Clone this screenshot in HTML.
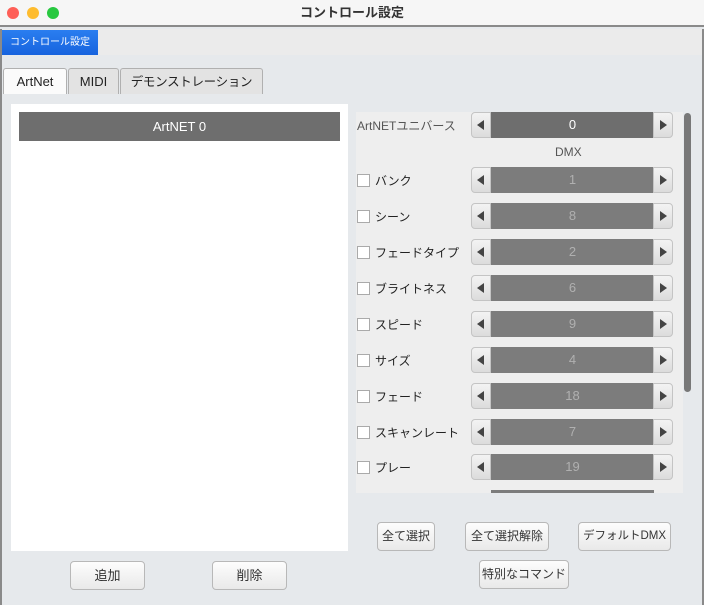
<!DOCTYPE html>
<html><head><meta charset="utf-8"><style>
*{box-sizing:border-box;margin:0;padding:0}
body{width:704px;height:605px;overflow:hidden;background:#e6e9ec;font-family:"Liberation Sans","Noto Sans CJK JP",sans-serif;position:relative;color:#222}
.abs{position:absolute}
.title{left:0;top:0;width:704px;height:27px;background:#f6f6f6;border-bottom:2px solid #8a8a8a;text-align:center;font-size:13px;font-weight:bold;line-height:26px;color:#333}
.dot{top:7px;width:12px;height:12px;border-radius:50%}
.frame{left:0;top:29px;width:704px;height:576px;border-left:2px solid #8a8a8a;border-right:2px solid #8a8a8a}
.topband{left:2px;top:29px;width:700px;height:26px;background:#ebebeb}
.bluetab{left:2px;top:30px;width:96px;height:25px;background:linear-gradient(#2a7ef0,#1763de);color:#fff;font-size:10px;line-height:25px;text-align:center}
.tab{top:68px;height:26px;border:1px solid #b0b0b0;border-bottom:none;border-radius:3px 3px 0 0;background:#e3e3e3;font-size:13px;line-height:26px;text-align:center;white-space:nowrap;overflow:hidden}
.list{left:11px;top:104px;width:337px;height:447px;background:#fff}
.bar{left:19px;top:112px;width:321px;height:29px;background:#6e6e6e;color:#fff;font-size:13px;line-height:29px;text-align:center}
.rp{left:356px;top:112px;width:327px;height:381px;background:#eeeeee;overflow:hidden}
.sb{left:684px;top:113px;width:7px;height:279px;border-radius:4px;background:#787878}
.lbl{font-size:12px;color:#222;left:375px}
.cb{left:357px;width:13px;height:13px;background:#fff;border:1px solid #aaa}
.spin{left:471px;width:202px;height:26px}
.spin .l,.spin .r{position:absolute;top:0;width:20px;height:26px;background:linear-gradient(#f3f3f3,#dcdcdc);border:1px solid #c4c4c4}
.spin .l{left:0;border-radius:4px 0 0 4px}.spin .r{right:0;border-radius:0 4px 4px 0}
.spin .l::after{content:"";position:absolute;left:5px;top:7px;border-top:5px solid transparent;border-bottom:5px solid transparent;border-right:7px solid #444}
.spin .r::after{content:"";position:absolute;left:6px;top:7px;border-top:5px solid transparent;border-bottom:5px solid transparent;border-left:7px solid #444}
.spin .v{position:absolute;left:20px;right:19px;top:0;height:26px;background:#7c7c7c;color:#b0b0b0;font-size:13px;line-height:26px;text-align:center}
.btn{height:29px;border:1px solid #b8b8b8;border-radius:4px;background:linear-gradient(#fdfdfd,#e9e9e9);font-size:12px;line-height:27px;text-align:center;color:#333;white-space:nowrap;overflow:hidden}
</style></head><body>
<div class="abs title">コントロール設定</div>
<div class="abs dot" style="left:7px;background:#fe5f57"></div>
<div class="abs dot" style="left:27px;background:#febc2e"></div>
<div class="abs dot" style="left:47px;background:#28c840"></div>
<div class="abs frame"></div>
<div class="abs topband"></div>
<div class="abs bluetab">コントロール設定</div>
<div class="abs tab" style="left:3px;width:64px;background:#fbfbfb">ArtNet</div>
<div class="abs tab" style="left:68px;width:51px">MIDI</div>
<div class="abs tab" style="left:120px;width:143px;font-size:12.5px;letter-spacing:-0.3px">デモンストレーション</div>
<div class="abs list"></div>
<div class="abs bar">ArtNET 0</div>
<div class="abs rp"></div>
<div class="abs sb"></div>
<div class="abs lbl" style="left:357px;top:117px;color:#555">ArtNETユニバース</div>
<div class="abs spin" style="top:112px"><div class="l"></div><div class="v" style="background:#6e6e6e;color:#fff">0</div><div class="r"></div></div>
<div class="abs" style="left:555px;top:145px;font-size:12px;color:#555">DMX</div>
<div class="abs cb" style="top:174px"></div><div class="abs lbl" style="top:172px">バンク</div>
<div class="abs spin" style="top:167px"><div class="l"></div><div class="v">1</div><div class="r"></div></div>
<div class="abs cb" style="top:210px"></div><div class="abs lbl" style="top:208px">シーン</div>
<div class="abs spin" style="top:203px"><div class="l"></div><div class="v">8</div><div class="r"></div></div>
<div class="abs cb" style="top:246px"></div><div class="abs lbl" style="top:244px">フェードタイプ</div>
<div class="abs spin" style="top:239px"><div class="l"></div><div class="v">2</div><div class="r"></div></div>
<div class="abs cb" style="top:282px"></div><div class="abs lbl" style="top:280px">ブライトネス</div>
<div class="abs spin" style="top:275px"><div class="l"></div><div class="v">6</div><div class="r"></div></div>
<div class="abs cb" style="top:318px"></div><div class="abs lbl" style="top:316px">スピード</div>
<div class="abs spin" style="top:311px"><div class="l"></div><div class="v">9</div><div class="r"></div></div>
<div class="abs cb" style="top:354px"></div><div class="abs lbl" style="top:352px">サイズ</div>
<div class="abs spin" style="top:347px"><div class="l"></div><div class="v">4</div><div class="r"></div></div>
<div class="abs cb" style="top:390px"></div><div class="abs lbl" style="top:388px">フェード</div>
<div class="abs spin" style="top:383px"><div class="l"></div><div class="v">18</div><div class="r"></div></div>
<div class="abs cb" style="top:426px"></div><div class="abs lbl" style="top:424px">スキャンレート</div>
<div class="abs spin" style="top:419px"><div class="l"></div><div class="v">7</div><div class="r"></div></div>
<div class="abs cb" style="top:461px"></div><div class="abs lbl" style="top:459px">プレー</div>
<div class="abs spin" style="top:454px"><div class="l"></div><div class="v">19</div><div class="r"></div></div>
<div class="abs" style="left:471px;top:490px;width:202px;height:3px;overflow:hidden"><div style="margin-left:20px;width:163px;height:3px;background:#7c7c7c"></div></div>
<div class="abs btn" style="left:377px;top:522px;width:58px">全て選択</div>
<div class="abs btn" style="left:465px;top:522px;width:84px">全て選択解除</div>
<div class="abs btn" style="left:578px;top:522px;width:93px;font-size:11.5px">デフォルトDMX</div>
<div class="abs btn" style="left:479px;top:560px;width:90px">特別なコマンド</div>
<div class="abs btn" style="left:70px;top:561px;width:75px;font-size:13px">追加</div>
<div class="abs btn" style="left:212px;top:561px;width:75px;font-size:13px">削除</div>
</body></html>
